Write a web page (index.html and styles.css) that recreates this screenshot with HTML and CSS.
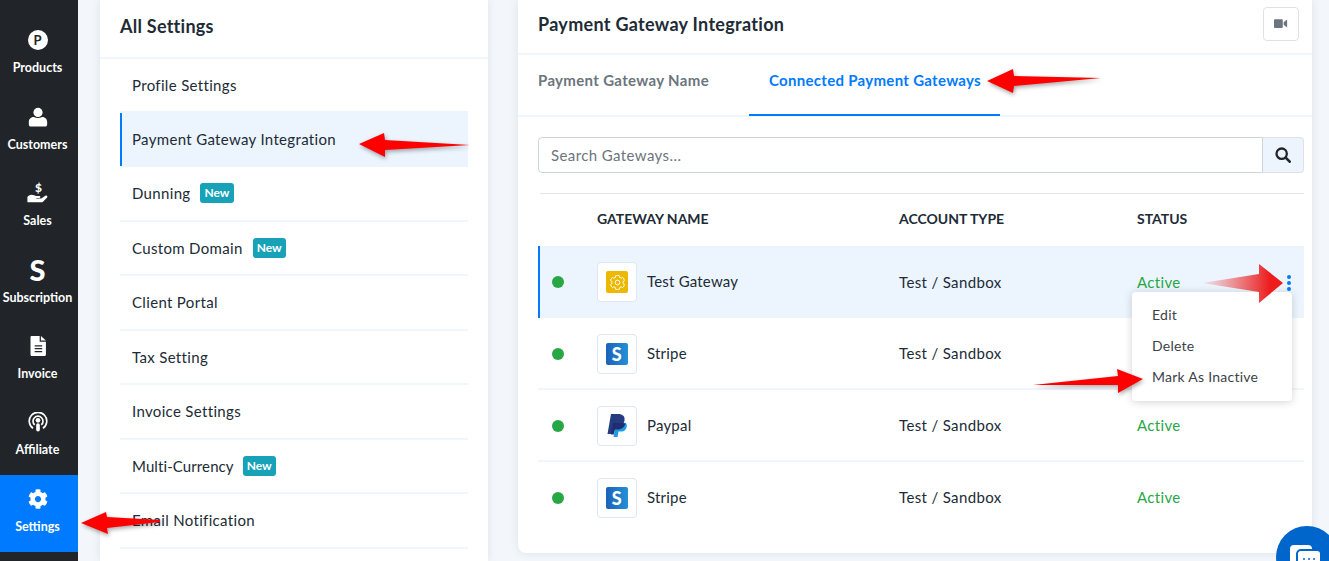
FILE: index.html
```html
<!DOCTYPE html>
<html lang="en">
<head>
  <meta charset="UTF-8">
  <meta name="viewport" content="width=device-width, initial-scale=1">
  <title>Payment Gateway Integration</title>
  <link rel="stylesheet" href="styles.css">
</head>
<body>

  <div class="page">
    <nav class="sidebar">
      <a class="nav-item">
        <span class="nav-circle">P</span>
        <span>Products</span>
      </a>
      <a class="nav-item">
        <svg class="nav-icon" viewBox="0 0 24 24"><circle cx="12" cy="6.500" r="5.500"/><path d="M1 21v-3c0-4 3-6 6-6 3 1.500 7 1.500 10 0 3 0 6 2 6 6v3c0 1.500-1 2.500-2.500 2.500h-17C2 23.500 1 22.500 1 21z"/></svg>
        <span>Customers</span>
      </a>
      <a class="nav-item">
        <svg class="nav-icon nav-icon-wide" viewBox="0 0 24 24"><path d="M1 17.500c1-1.500 2.500-2.500 4.500-2.500 2 0 3.500 1.300 5.500 1.300h3c1.500 0 1.500 2.200 0 2.200h-3.500v.7H16l4.500-3.200c1.500-1 3.200.8 1.800 2.200L18 22.500c-.6.500-1.200.7-2 .7H1z"/><text class="nav-dollar" x="13" y="12" text-anchor="middle">$</text></svg>
        <span>Sales</span>
      </a>
      <a class="nav-item">
        <span class="nav-letter">S</span>
        <span>Subscription</span>
      </a>
      <a class="nav-item">
        <svg class="nav-icon" viewBox="0 0 24 24"><path fill-rule="evenodd" d="M4.500 0H14v7h7.500v15.500c0 .8-.7 1.500-1.500 1.500H4.500c-.8 0-1.500-.7-1.500-1.500v-21C3 .7 3.700 0 4.500 0zM8 11v1.500h9V11zm0 3.500V16h9v-1.500zM8 18v1.500h9V18zM15.500 0l6 5.500h-6z"/></svg>
        <span>Invoice</span>
      </a>
      <a class="nav-item">
        <svg class="nav-icon" viewBox="0 0 24 24"><path fill="none" stroke="#fff" stroke-width="2" d="M6 19.500a10.500 10.500 0 1 1 12 0"/><path fill="none" stroke="#fff" stroke-width="2" d="M8 15.500a6 6 0 1 1 8 0"/><circle cx="12" cy="10" r="2.800"/><rect x="9.800" y="13.500" width="4.400" height="10" rx="2.200"/></svg>
        <span>Affiliate</span>
      </a>
      <a class="nav-item nav-active">
        <svg class="nav-icon" viewBox="0 0 512 512"><path d="M487.400 315.700l-42.600-24.600c4.300-23.200 4.300-47 0-70.200l42.600-24.600c4.900-2.800 7.100-8.600 5.500-14-11.100-35.600-30-67.800-54.700-94.600-3.800-4.100-10-5.100-14.800-2.300L380.800 110c-17.900-15.400-38.500-27.300-60.800-35.100V25.800c0-5.600-3.900-10.500-9.400-11.700-36.700-8.200-74.300-7.800-109.200 0-5.500 1.200-9.400 6.100-9.400 11.700V75c-22.200 7.900-42.800 19.800-60.800 35.100L88.700 85.500c-4.900-2.800-11-1.900-14.800 2.300-24.700 26.700-43.600 58.900-54.700 94.600-1.700 5.400.6 11.200 5.500 14L67.300 221c-4.300 23.200-4.300 47 0 70.200l-42.600 24.600c-4.900 2.800-7.100 8.600-5.500 14 11.100 35.600 30 67.800 54.700 94.600 3.800 4.100 10 5.100 14.800 2.300l42.600-24.600c17.900 15.400 38.500 27.300 60.800 35.100v49.200c0 5.600 3.900 10.500 9.400 11.700 36.700 8.200 74.300 7.800 109.200 0 5.500-1.200 9.400-6.100 9.400-11.700v-49.200c22.200-7.900 42.800-19.800 60.800-35.100l42.600 24.600c4.900 2.800 11 1.900 14.800-2.300 24.700-26.700 43.600-58.900 54.700-94.600 1.500-5.500-.7-11.300-5.600-14.100zM256 336c-44.100 0-80-35.900-80-80s35.900-80 80-80 80 35.900 80 80-35.900 80-80 80z"/></svg>
        <span>Settings</span>
      </a>
    </nav>

    <aside class="card settings-card">
      <h2 class="settings-title">All Settings</h2>
      <ul class="settings-list">
        <li class="first">Profile Settings</li>
        <li class="selected">Payment Gateway Integration</li>
        <li>Dunning <span class="badge">New</span></li>
        <li>Custom Domain <span class="badge">New</span></li>
        <li>Client Portal</li>
        <li>Tax Setting</li>
        <li>Invoice Settings</li>
        <li class="tight">Multi-Currency <span class="badge">New</span></li>
        <li>Email Notification</li>
      </ul>
    </aside>

    <main class="card gateway-card">
      <header class="gateway-head">
        <h1>Payment Gateway Integration</h1>
        <button class="video-btn">
          <svg viewBox="0 0 16 12" width="14" height="11"><rect y="1" width="10" height="10" rx="1"/><path d="M11 4.500 15 1.500v9l-4-3z"/></svg>
        </button>
      </header>

      <div class="tabs">
        <a class="tab">Payment Gateway Name</a>
        <a class="tab tab-active">Connected Payment Gateways</a>
      </div>

      <div class="gateway-body">
        <div class="search">
          <div class="search-input">Search Gateways...</div>
          <button class="search-btn">
            <svg viewBox="0 0 18 18" width="16" height="16"><circle cx="7.500" cy="7.500" r="5.800" fill="none" stroke="#212529" stroke-width="2.600"/><path d="M12 12l4.500 4.500" stroke="#212529" stroke-width="3" stroke-linecap="round"/></svg>
          </button>
        </div>

        <div class="table">
          <div class="row row-head">
            <span></span>
            <span>GATEWAY NAME</span>
            <span>ACCOUNT TYPE</span>
            <span>STATUS</span>
          </div>

          <div class="row row-selected">
            <span class="dot"></span>
            <div class="gateway-name">
              <span class="logo-box">
                <span class="logo logo-test">
                  <svg viewBox="0 0 512 512" width="15" height="15"><path fill="none" stroke="#fff" stroke-width="32" d="M487.400 315.700l-42.600-24.600c4.300-23.200 4.300-47 0-70.200l42.600-24.600c4.900-2.800 7.100-8.600 5.500-14-11.100-35.600-30-67.800-54.700-94.600-3.800-4.100-10-5.100-14.800-2.300L380.800 110c-17.900-15.400-38.500-27.300-60.800-35.100V25.800c0-5.600-3.900-10.500-9.400-11.700-36.700-8.200-74.300-7.800-109.200 0-5.500 1.200-9.400 6.100-9.400 11.700V75c-22.200 7.900-42.800 19.800-60.800 35.100L88.700 85.500c-4.900-2.800-11-1.900-14.800 2.300-24.700 26.700-43.600 58.900-54.700 94.600-1.700 5.400.6 11.200 5.500 14L67.300 221c-4.300 23.200-4.300 47 0 70.200l-42.600 24.600c-4.900 2.800-7.100 8.600-5.500 14 11.100 35.600 30 67.800 54.700 94.600 3.800 4.100 10 5.100 14.800 2.300l42.600-24.600c17.900 15.400 38.500 27.300 60.800 35.100v49.200c0 5.600 3.900 10.500 9.400 11.700 36.700 8.200 74.300 7.800 109.200 0 5.500-1.200 9.400-6.100 9.400-11.700v-49.200c22.200-7.900 42.800-19.800 60.800-35.100l42.600 24.600c4.900 2.800 11 1.900 14.800-2.300 24.700-26.700 43.600-58.900 54.700-94.600 1.500-5.500-.7-11.300-5.600-14.100z"/><circle cx="256" cy="256" r="80" fill="none" stroke="#fff" stroke-width="32"/></svg>
                </span>
              </span>
              <span class="gateway-text">Test Gateway</span>
            </div>
            <span>Test / Sandbox</span>
            <span class="status">Active</span>
            <span class="kebab"><i></i><i></i><i></i></span>
            <ul class="row-menu">
              <li>Edit</li>
              <li>Delete</li>
              <li>Mark As Inactive</li>
            </ul>
          </div>

          <div class="row">
            <span class="dot"></span>
            <div class="gateway-name">
              <span class="logo-box"><span class="logo logo-stripe">S</span></span>
              <span class="gateway-text">Stripe</span>
            </div>
            <span>Test / Sandbox</span>
            <span></span>
          </div>

          <div class="row">
            <span class="dot"></span>
            <div class="gateway-name">
              <span class="logo-box">
                <svg viewBox="0 0 20 24" width="20" height="24"><path fill="#1c9be6" d="M6.500 23h4l1-5.500h2.500c3.500 0 5.500-2.300 5.800-5.300.2-1.700-.4-3-1.500-3.700L8 15z"/><path fill="#253b80" d="M4 0h7c4.500 0 7.300 2.300 6.500 6.500-.7 4-3.500 6.500-8 6.500H7l-1.300 7H.5z"/><path fill="#1f2e70" d="M6 9h7c2 0 4 0 5.300.7-.8 3.400-3.800 5.800-7.300 5.800H8l-1.300 5H4z"/></svg>
              </span>
              <span class="gateway-text">Paypal</span>
            </div>
            <span>Test / Sandbox</span>
            <span class="status">Active</span>
          </div>

          <div class="row row-last">
            <span class="dot"></span>
            <div class="gateway-name">
              <span class="logo-box"><span class="logo logo-stripe">S</span></span>
              <span class="gateway-text">Stripe</span>
            </div>
            <span>Test / Sandbox</span>
            <span class="status">Active</span>
          </div>
        </div>
      </div>
    </main>
  </div>

  <div class="chat-bubble">
    <svg viewBox="0 0 40 30" width="40" height="30"><rect x="3" y="1" width="22" height="20" rx="4" fill="#fff"/><rect x="10" y="6" width="24" height="20" rx="4" fill="#fff" stroke="#06c" stroke-width="2"/><circle cx="17" cy="15" r="1" fill="#06c"/><circle cx="22" cy="15" r="1" fill="#06c"/><circle cx="27" cy="15" r="1" fill="#06c"/></svg>
  </div>

  <!-- red annotation arrows drawn over the screenshot -->
  <svg class="arrows" width="1329" height="561" viewBox="0 0 1329 561">
    <defs>
      <linearGradient id="fadeArrow" gradientUnits="userSpaceOnUse" x1="1204" y1="0" x2="1270" y2="0">
        <stop offset="0" stop-color="#e83a3a" stop-opacity="0.1"/>
        <stop offset="1" stop-color="#ee1c1c"/>
      </linearGradient>
    </defs>
    <polygon class="arrow" points="81,523 106,512 107,517 160,520 160,522 107,528 108,534"/>
    <polygon class="arrow" points="359,144 384,133 385,140 470,145 385,150 385,157"/>
    <polygon class="arrow" points="987,81 1013,69 1014,76 1101,78 1014,86 1013,93"/>
    <polygon class="arrow" points="1143,379 1117,369 1118,376 1033,385 1118,385 1118,393"/>
    <polygon fill="url(#fadeArrow)" points="1283,283 1259,264 1259,274 1202,283 1259,292 1259,303"/>
  </svg>

</body>
</html>
```

FILE: styles.css
```css
* {
  box-sizing: border-box;
}

html, body {
  margin: 0;
  padding: 0;
  height: 561px;
  overflow: hidden;
}

body {
  font-family: "Lato", "Noto Sans", sans-serif;
  font-size: 15px;
  color: #212b36;
  background: #f3f7fb;
  position: relative;
}

.page {
  display: flex;
  height: 561px;
}

/* left dark menu */
.sidebar {
  width: 78px;
  flex-shrink: 0;
  background: #212529;
  padding-top: 17px;
}

.nav-item {
  height: 76.4px;
  display: flex;
  flex-direction: column;
  align-items: center;
  justify-content: flex-end;
  gap: 10px;
  padding: 0 3px 18px 0;
  color: #fff;
  font-size: 12.5px;
  font-weight: 700;
}

.nav-active {
  background: #007bff;
}

.nav-icon {
  width: 20px;
  height: 20px;
  fill: #fff;
}

.nav-icon-wide {
  width: 23px;
  height: 22px;
  margin-top: -2px;
}

.nav-dollar {
  font-size: 13px;
  font-weight: 900;
  font-family: "Lato", sans-serif;
}

.nav-circle {
  width: 20px;
  height: 20px;
  border-radius: 50%;
  background: #fff;
  color: #212529;
  font-size: 13px;
  font-weight: 700;
  display: flex;
  align-items: center;
  justify-content: center;
}

.nav-letter {
  height: 20px;
  font-size: 29px;
  line-height: 20px;
  font-weight: 900;
}

/* cards */
.card {
  background: #fff;
  box-shadow: 0 0 8px rgba(40, 70, 110, 0.12);
}

.settings-card {
  width: 388px;
  margin-left: 22px;
  padding: 0 20px;
  flex-shrink: 0;
}

.settings-title {
  margin: 0 -20px;
  padding: 0 20px;
  height: 59px;
  line-height: 52px;
  font-size: 18px;
  font-weight: 700;
  letter-spacing: 0.25px;
  border-bottom: 2px solid #f0f6fd;
}

.settings-list {
  list-style: none;
  margin: 0;
  padding: 0;
}

.settings-list li {
  height: 54.5px;
  padding-left: 12px;
  display: flex;
  align-items: center;
  gap: 10px;
  letter-spacing: 0.33px;
  border-bottom: 2px solid #f0f6fd;
}

.settings-list li.first {
  height: 52px;
  border-bottom: 0;
}

.settings-list li.selected {
  height: 56px;
  background: linear-gradient(#007bff, #007bff) 0 2px / 2px 53px no-repeat, #ecf5fe;
  border-bottom: 0;
}

.settings-list li.tight {
  letter-spacing: 0.1px;
  gap: 9px;
}

.badge {
  background: #17a2b8;
  color: #fff;
  font-size: 12px;
  font-weight: 700;
  line-height: 20px;
  padding: 0 4px;
  border-radius: 3px;
  letter-spacing: 0;
}

.gateway-card {
  width: 794px;
  height: 553px;
  margin-left: 30px;
  border-radius: 0 0 8px 8px;
}

.gateway-head {
  height: 55px;
  padding: 0 13px 6px 20px;
  display: flex;
  align-items: center;
  justify-content: space-between;
  border-bottom: 2px solid #f0f6fd;
}

.gateway-head h1 {
  margin: 0;
  font-size: 18px;
  font-weight: 700;
  letter-spacing: 0.3px;
}

.video-btn {
  width: 36px;
  height: 34px;
  border: 1px solid #dee2e6;
  border-radius: 4px;
  background: #fff;
  padding: 0;
  display: flex;
  align-items: center;
  justify-content: center;
  fill: #6c757d;
}

.tabs {
  height: 62px;
  padding-left: 20px;
  display: flex;
  gap: 40px;
  border-bottom: 2px solid #f0f6fd;
}

.tab {
  height: 61px;
  line-height: 50px;
  font-weight: 700;
  color: #6c757d;
  letter-spacing: 0.33px;
}

.tab-active {
  color: #007bff;
  padding: 0 19px 0 20px;
  letter-spacing: 0.3px;
  border-bottom: 2px solid #007bff;
}

.gateway-body {
  padding: 20px 8px 0 20px;
}

.search {
  display: flex;
  height: 36px;
}

.search-input {
  flex: 1;
  padding-left: 12px;
  line-height: 34px;
  color: #6c757d;
  letter-spacing: 0.4px;
  border: 1px solid #ced4da;
  border-radius: 4px 0 0 4px;
}

.search-btn {
  width: 41px;
  padding: 0;
  border: 1px solid #dee2e6;
  border-left: 0;
  border-radius: 0 4px 4px 0;
  background: #ecf5fe;
  display: flex;
  align-items: center;
  justify-content: center;
}

.table {
  margin-top: 20px;
}

/* the top rule starts a little right of the rows */
.table::before {
  content: "";
  display: block;
  height: 1px;
  margin-left: 2px;
  background: #dee6f0;
}

.row {
  display: grid;
  grid-template-columns: 59px 302px 238px 1fr;
  align-items: center;
  height: 72px;
  padding-top: 2px;
  letter-spacing: 0.35px;
  border-bottom: 2px solid #f0f6fd;
  position: relative;
}

/* plain cells sit a pixel above the logo centre */
.row > span {
  margin-top: -2px;
}

.row-head {
  height: 52px;
  padding: 0 0 4px;
  border-bottom: 0;
  font-size: 14px;
  font-weight: 700;
  letter-spacing: 0;
}

.row-selected {
  padding-top: 0;
  background: #ecf5fe;
  border-bottom: 0;
  box-shadow: inset 2px 0 0 #007bff;
}

.row-head > span,
.row-selected > span {
  margin-top: 0;
}

.row-last {
  border-bottom-color: transparent;
}

.row > .dot {
  width: 12px;
  height: 12px;
  margin: 0 0 0 14px;
  border-radius: 50%;
  background: #28a745;
}

.gateway-name {
  display: flex;
  align-items: center;
  gap: 10px;
}

.gateway-text {
  margin-top: -2px;
  letter-spacing: 0.2px;
}

.logo-box {
  width: 40px;
  height: 40px;
  background: #fff;
  border: 1px solid #dde7f5;
  border-radius: 4px;
  display: flex;
  align-items: center;
  justify-content: center;
}

.logo {
  width: 22px;
  height: 22px;
  border-radius: 2px;
  display: flex;
  align-items: center;
  justify-content: center;
  color: #fff;
}

.logo-test {
  background: #ecb800;
}

.logo-stripe {
  background: linear-gradient(90deg, #1c62b9, #2391d6);
  font-size: 18px;
  font-weight: 900;
}

.status {
  color: #28a745;
}

.kebab {
  position: absolute;
  left: 749px;
  top: 29px;
  display: flex;
  flex-direction: column;
  gap: 2px;
}

.kebab i {
  width: 4px;
  height: 4px;
  border-radius: 50%;
  background: #007bff;
}

.row-menu {
  list-style: none;
  position: absolute;
  z-index: 2;
  left: 594px;
  top: 46px;
  width: 160px;
  height: 109px;
  margin: 0;
  padding: 7px 0 0 20px;
  background: #fff;
  border-radius: 4px;
  box-shadow: 0 1px 8px rgba(0, 0, 0, 0.18);
  font-size: 14px;
  letter-spacing: 0.25px;
  color: #3c4248;
}

.row-menu li {
  height: 31px;
  line-height: 31px;
}

/* bottom corner widget */
.chat-bubble {
  position: absolute;
  left: 1276px;
  top: 526px;
  width: 62px;
  height: 62px;
  border-radius: 50%;
  background: #06c;
  padding: 18px 0 0 11px;
}

.arrows {
  position: absolute;
  left: 0;
  top: 0;
  z-index: 5;
  pointer-events: none;
}

.arrow {
  fill: #f00;
  filter: drop-shadow(1px 2px 2px rgba(0, 0, 0, 0.35));
}
```
